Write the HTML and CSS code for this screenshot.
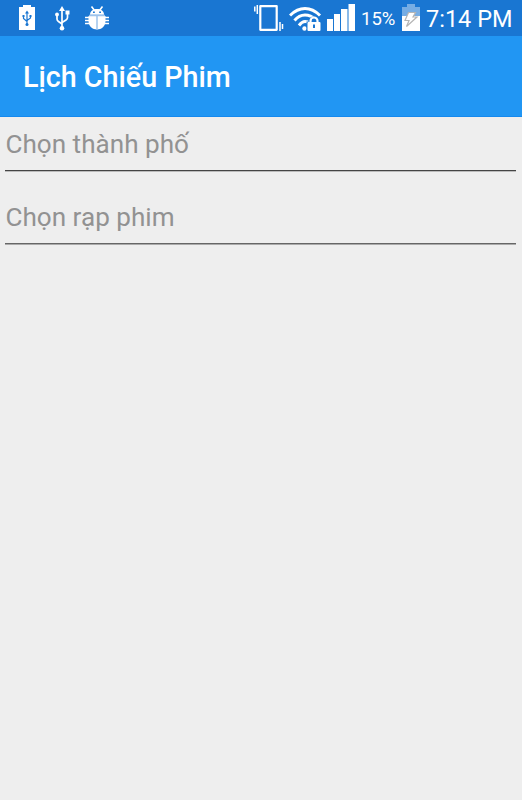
FILE: index.html
```html
<!DOCTYPE html>
<html lang="vi">
<head>
<meta charset="UTF-8">
<meta name="viewport" content="width=device-width, initial-scale=1.0">
<title>Lịch Chiếu Phim</title>
<link rel="stylesheet" href="styles.css">
</head>
<body>
<div class="status-bar">
  <!-- Notifications -->
  <div class="notifications">
    <svg class="icon-usb-battery" width="16" height="25" viewBox="0 0 16 25">
      <path fill="#fff" d="M4 0h8v2h4v23H0V2h4z"/>
      <path fill="none" stroke="#1976d2" stroke-width="1.2" d="M8 8v11M4.5 11v2.5L8 16.5M11.5 11v2L8 15.5"/>
      <path fill="#1976d2" d="M8 5.5l2 3H6zM3.5 10h2v2h-2zM10.5 10h2v2h-2z"/>
      <circle cx="8" cy="19.5" r="1.5" fill="#1976d2"/>
    </svg>
    <svg class="icon-usb" width="15" height="25" viewBox="0 0 15 25">
      <path fill="none" stroke="#fff" stroke-width="1.7" d="M7 4v17M2 9v4q0 1.5 1.5 2.5L7 18M12.5 7v4.5q0 1.5-1.5 2.5L7 16.5"/>
      <path fill="#fff" d="M7 0l3 5H4zM10.5 4.5h4v4h-4z"/>
      <circle cx="2" cy="8.5" r="1.9" fill="#fff"/>
      <circle cx="7" cy="22.3" r="2.3" fill="#fff"/>
    </svg>
    <svg class="icon-bug" width="24" height="24" viewBox="0 0 24 24">
      <path stroke="#fff" stroke-width="1.6" d="M6.5 .5l3 4M17.5 .5l-3 4"/>
      <path fill="#fff" d="M5 8.800C5 5 8 3 12 3s7 2 7 5.800z"/>
      <path fill="#fff" d="M3.5 10h17v5c0 5-4 8.500-8.500 8.500S3.500 20 3.500 15z"/>
      <path stroke="#fff" stroke-width="1.6" d="M0 11.500h24M0 14.500h24M0 17.500h24"/>
      <path stroke="#9dc3ec" stroke-width="1.5" d="M4 9.500h16M12 10v13.500"/>
      <path fill="#1976d2" d="M8 5.500h1.800v1.500H8zM14.200 5.500h1.800v1.500h-1.800z"/>
    </svg>
  </div>

  <!-- System icons -->
  <div class="system">
    <svg class="icon-vibrate" width="30" height="27" viewBox="0 0 30 27">
      <path fill="none" stroke="#fff" stroke-width="2.2" stroke-linejoin="round" d="M6.300 1.200h16.400v23.600H6.300z"/>
      <path stroke="#fff" stroke-width="1.5" d="M.8 1.500v5M3.300 0v9M26 17v9M28.500 19v5"/>
    </svg>
    <svg class="icon-wifi" width="33" height="25" viewBox="0 0 33 25">
      <g fill="none" stroke="#fff" stroke-width="3">
        <path d="M1 8.500Q8 1.500 16 1.500T31 8.500"/>
        <path d="M5.500 13.500Q10 8 16 8T26 12.500"/>
        <path d="M10 18.500Q13 14.500 16 14.500T20 16"/>
      </g>
      <circle cx="15.5" cy="21.5" r="2.2" fill="#fff"/>
      <path fill="#1976d2" d="M17.500 14.500h2q.5-5 5.500-5t5.500 5h2v10.500h-15z"/>
      <path fill="none" stroke="#fff" stroke-width="2.2" d="M21.500 16v-2a3.500 3.500 0 0 1 7 0v2"/>
      <rect x="18.5" y="15" width="13" height="9" rx="1" fill="#fff"/>
      <path fill="#1976d2" d="M24 17.500h2v3.500h-2z"/>
    </svg>
    <svg class="icon-signal" width="28" height="27" viewBox="0 0 28 27">
      <path fill="#fff" d="M0 15h6v12H0zM7 10h6v17H7zM14 5h6.500v22H14zM21.500 0H28v27h-6.500z"/>
    </svg>
    <span class="percent">15%</span>
    <svg class="icon-battery" width="18" height="27" viewBox="0 0 18 27">
      <path fill="#76ade4" d="M5 0h8v3h5v9H0V3h5z"/>
      <path fill="#fff" d="M0 12h18v15H0z"/>
      <path fill="#fff" stroke="#b5b5b5" stroke-width="1.2" d="M6.500 8.500h7L11 13h4L4.500 22.500l2.500-6H3z"/>
    </svg>
    <span class="clock">7:14 PM</span>
  </div>
</div>

<div class="toolbar">
  <h1>Lịch Chiếu Phim</h1>
</div>

<form class="schedule-form">
  <div class="field">Chọn thành phố</div>
  <div class="field field-cinema">Chọn rạp phim</div>
</form>
</body>
</html>
```

FILE: styles.css
```css
* {
  box-sizing: border-box;
}
body {
  font-family: Roboto, sans-serif;
  margin: 0;
  min-height: 800px;
  background-color: #eeeeee;
}
svg {
  display: block;
  flex: none;
}
.status-bar {
  display: flex;
  justify-content: space-between;
  height: 36px;
  background-color: #1976d2;
  color: #fff;
}
.notifications,
.system {
  display: flex;
  align-items: flex-start;
}
.notifications {
  padding-left: 19px;
}
.icon-usb-battery {
  margin-top: 5px;
}
.icon-usb {
  margin: 6px 0 0 20px;
}
.icon-bug {
  margin: 6px 0 0 15px;
}
.system {
  padding-right: 10px;
}
.icon-vibrate {
  margin: 5px 5px 0 0;
}
.icon-wifi {
  margin: 7px 5px 0 0;
}
.icon-signal {
  margin: 4px 5px 0 0;
}
.percent {
  width: 42px;
  padding-left: 1px;
  font-size: 18.5px;
  line-height: 38px;
}
.icon-battery {
  margin: 4px 6px 0 0;
}
.clock {
  width: 86px;
  font-size: 23.5px;
  line-height: 38px;
  white-space: nowrap;
}
.toolbar {
  display: flex;
  align-items: center;
  height: 81px;
  padding: 2px 0 0 23px;
  background-color: #2196f3;
  border-bottom: 1px solid #1589ee;
}
.toolbar h1 {
  margin: 0;
  font-size: 28.7px;
  font-weight: 500;
  line-height: 40px;
  color: #fff;
}
.schedule-form {
  padding: 0 6px 0 5px;
}
.field {
  height: 54px;
  padding-left: 0.5px;
  font-size: 26.1px;
  line-height: 54px;
  color: #929292;
  border-bottom: 1px solid #444;
  box-shadow: 0 1px 0 #bbb;
}
.field-cinema {
  margin-top: 19px;
  border-bottom-color: #666;
  box-shadow: 0 1px 0 #aaa;
}
```
